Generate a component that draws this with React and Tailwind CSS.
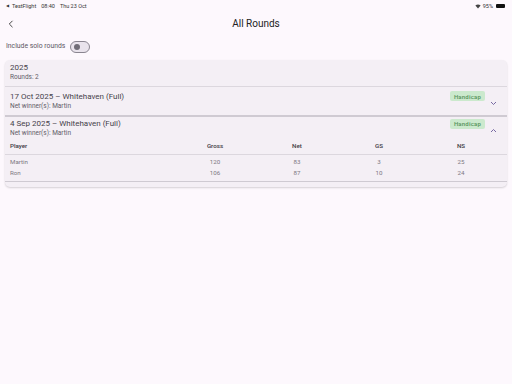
import React from "react";

const font = { fontFamily: "Roboto, 'Noto Sans', sans-serif" };

function Badge() {
  return (
    <span className="rounded-[2px] bg-[#cbe9cd] px-[4px] h-[10px] flex items-center text-[6px] font-medium tracking-[0.2px] text-[#54925a]">
      Handicap
    </span>
  );
}

function Chevron({ up }) {
  return (
    <svg width="7" height="5" viewBox="0 0 7 5" className="text-[#6a5a9a]">
      <path d={up ? "M1 4 L3.5 1.5 L6 4" : "M1 1 L3.5 3.5 L6 1"} fill="none" stroke="currentColor" strokeWidth="0.9" />
    </svg>
  );
}

export default function App() {
  const rows = [
    ["Martin", "120", "83", "3", "25"],
    ["Ron", "106", "87", "10", "24"],
  ];
  return (
    <div style={font} className="w-[512px] h-[384px] bg-[#fdf8fd] text-[#1d1b20] overflow-hidden">
      {/* status bar */}
      <div className="h-[12px] flex items-center justify-between px-[6px] text-[5.5px] text-[#333]">
        <div className="flex items-center gap-[3px]">
          <span className="text-[4px]">◀</span>
          <span>TestFlight</span>
          <span className="ml-[2px]">08:40</span>
          <span className="ml-[2px]">Thu 23 Oct</span>
        </div>
        <div className="flex items-center gap-[2px] mr-[1px]">
          <svg width="6" height="5" viewBox="0 0 6 5">
            <path d="M3 4.6 L0.4 1.6 A4 4 0 0 1 5.6 1.6 Z" fill="#444" />
          </svg>
          <span>95%</span>
          <span className="w-[9px] h-[4px] rounded-[1px] bg-[#111] ml-[1px]"></span>
        </div>
      </div>
      {/* header */}
      <div className="h-[21px] pt-[3px] relative flex items-center justify-center">
        <svg width="6" height="8" viewBox="0 0 6 8" className="absolute left-[8px] top-[8px]">
          <path d="M4.5 0.8 L1.3 4 L4.5 7.2" fill="none" stroke="#333" strokeWidth="0.9" />
        </svg>
        <span className="text-[10px] leading-none text-[#222]">All Rounds</span>
      </div>
      {/* toggle row */}
      <div className="h-[27px] flex items-center px-[6px] gap-[5px]">
        <span className="text-[6.8px] text-[#5c5762]">Include solo rounds</span>
        <div className="w-[20px] h-[12px] rounded-full border border-[#8a8590] bg-[#e9e3ec] flex items-center pl-[2.5px]">
          <div className="w-[6px] h-[6px] rounded-full bg-[#716d77]"></div>
        </div>
      </div>
      {/* card */}
      <div className="mx-[5px] rounded-[5px] bg-[#f4eff5] shadow-[0_1px_2px_rgba(0,0,0,0.16)] overflow-hidden">
        <div className="px-[5px] pt-[3px] pb-[4px] h-[26px]">
          <div className="text-[8px] text-[#46424b] leading-[10px]">2025</div>
          <div className="text-[6.5px] text-[#625d68] leading-[9px]">Rounds: 2</div>
        </div>
        <div className="h-px bg-[#dcd7de]"></div>
        <div className="h-[28px] flex items-center px-[5px]">
          <div className="flex-1">
            <div className="text-[8px] leading-[10px] text-[#46424b]">17 Oct 2025 – Whitehaven (Full)</div>
            <div className="text-[6.5px] leading-[9px] text-[#625d68]">Net winner(s): Martin</div>
          </div>
          <div className="self-start mt-[4px]"><Badge /></div>
          <div className="ml-[5px] mr-[5px] mt-[5px]"><Chevron /></div>
        </div>
        <div className="h-[1.5px] bg-[#cfcad2]"></div>
        <div className="h-[23px] flex items-center px-[5px]">
          <div className="flex-1">
            <div className="text-[8px] leading-[10px] text-[#46424b]">4 Sep 2025 – Whitehaven (Full)</div>
            <div className="text-[6.5px] leading-[9px] text-[#625d68]">Net winner(s): Martin</div>
          </div>
          <div className="self-start mt-[2px]"><Badge /></div>
          <div className="ml-[5px] mr-[5px] mt-[5px]"><Chevron up /></div>
        </div>
        <div className="px-[5px]">
          <div className="h-[14px] flex items-center text-[6.2px] text-[#3e3a43] font-medium">
            <div className="flex-[2]">Player</div>
            <div className="flex-1 text-center">Gross</div>
            <div className="flex-1 text-center">Net</div>
            <div className="flex-1 text-center">GS</div>
            <div className="flex-1 text-center">NS</div>
          </div>
        </div>
        <div className="h-px bg-[#dcd7de]"></div>
        <div className="px-[5px] pt-[3px] pb-[1px]">
          {rows.map((r) => (
            <div key={r[0]} className="h-[11px] flex items-center text-[6.2px] text-[#7d7882]">
              <div className="flex-[2]">{r[0]}</div>
              <div className="flex-1 text-center">{r[1]}</div>
              <div className="flex-1 text-center">{r[2]}</div>
              <div className="flex-1 text-center">{r[3]}</div>
              <div className="flex-1 text-center">{r[4]}</div>
            </div>
          ))}
        </div>
        <div className="h-[1.5px] bg-[#cfcad2]"></div>
        <div className="h-[5px]"></div>
      </div>
    </div>
  );
}
